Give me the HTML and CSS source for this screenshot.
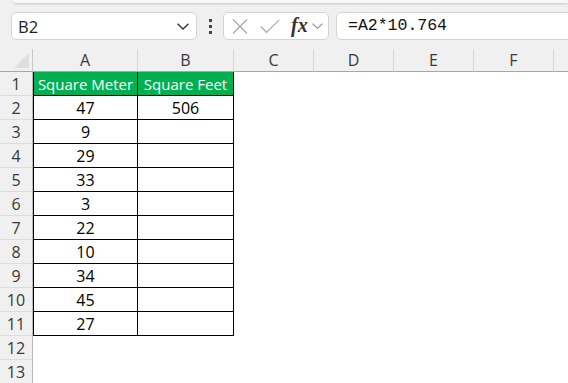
FILE: index.html
```html
<!DOCTYPE html>
<html>
<head>
<meta charset="utf-8">
<link rel="stylesheet" href="styles.css">
</head>
<body>
<div class="app">
  <div class="ribbon-edge"></div>
  <div class="fbar">
    <div class="namebox">
      <span class="nb-text">B2</span>
      <svg class="nb-chev" width="12" height="7" viewBox="0 0 12 7"><path d="M0.5 0.8 L6 6 L11.5 0.8" fill="none" stroke="#333" stroke-width="1.3"/></svg>
    </div>
    <div class="dots"><i></i><i></i><i></i></div>
    <div class="fbtns">
      <svg class="ic-x" width="16" height="15" viewBox="0 0 16 15"><path d="M1 0.5 L15 14.5 M15 0.5 L1 14.5" stroke="#a6a6a6" stroke-width="1.2" fill="none"/></svg>
      <svg class="ic-check" width="20" height="15" viewBox="0 0 20 15"><path d="M0.8 7.5 L6.5 13.5 L19.2 0.8" stroke="#a6a6a6" stroke-width="1.2" fill="none"/></svg>
      <span class="fx">fx</span>
      <svg class="fx-chev" width="11" height="6" viewBox="0 0 11 6"><path d="M0.5 0.6 L5.5 5.3 L10.5 0.6" fill="none" stroke="#8a8a8a" stroke-width="1.1"/></svg>
    </div>
    <div class="formula">=A2*10.764</div>
  </div>
  <div class="sheet">
    <div class="corner"><div class="tri"></div></div>
    <div class="ch">A</div><div class="ch">B</div><div class="ch">C</div><div class="ch">D</div><div class="ch">E</div><div class="ch">F</div><div class="ch last"></div>

    <div class="rh">1</div><div class="c t hd first">Square Meter</div><div class="c t hd">Square Feet</div><div class="e"></div>
    <div class="rh">2</div><div class="c t first">47</div><div class="c t">506</div><div class="e"></div>
    <div class="rh">3</div><div class="c t first">9</div><div class="c t"></div><div class="e"></div>
    <div class="rh">4</div><div class="c t first">29</div><div class="c t"></div><div class="e"></div>
    <div class="rh">5</div><div class="c t first">33</div><div class="c t"></div><div class="e"></div>
    <div class="rh">6</div><div class="c t first">3</div><div class="c t"></div><div class="e"></div>
    <div class="rh">7</div><div class="c t first">22</div><div class="c t"></div><div class="e"></div>
    <div class="rh">8</div><div class="c t first">10</div><div class="c t"></div><div class="e"></div>
    <div class="rh">9</div><div class="c t first">34</div><div class="c t"></div><div class="e"></div>
    <div class="rh">10</div><div class="c t first">45</div><div class="c t"></div><div class="e"></div>
    <div class="rh">11</div><div class="c t first">27</div><div class="c t"></div><div class="e"></div>
    <div class="rh">12</div><div class="c"></div><div class="c"></div><div class="e"></div>
    <div class="rh">13</div><div class="c"></div><div class="c"></div><div class="e"></div>
  </div>
</div>
</body>
</html>
```
FILE: styles.css
```css
html, body {
  margin: 0;
  padding: 0;
  background: #f0f0f0;
  overflow: hidden;
}
.app {
  width: 568px;
  height: 383px;
  overflow: hidden;
  font-family: "Open Sans", "Noto Sans", sans-serif;
}
.ribbon-edge {
  height: 3px;
  margin-left: 13px;
  background: #f8f8f8;
  border-bottom-left-radius: 4px;
  box-shadow: 0 1px 3px rgba(0,0,0,0.18);
}
.fbar {
  display: flex;
  align-items: center;
  height: 28px;
  margin-top: 9px;
  padding-left: 11px;
}
.namebox {
  box-sizing: border-box;
  width: 186px;
  height: 28px;
  background: #fff;
  border: 1px solid #d4d4d4;
  border-radius: 5px;
  display: flex;
  align-items: center;
  justify-content: space-between;
  padding: 0 7px 0 6px;
}
.nb-text {
  font-family: "Open Sans", sans-serif;
  font-size: 16.5px;
  color: #222;
}
.nb-chev { display: block; }
.dots {
  width: 26px;
  display: flex;
  flex-direction: column;
  align-items: center;
  gap: 3px;
}
.dots i {
  display: block;
  width: 3px;
  height: 3px;
  background: #444;
}
.fbtns {
  box-sizing: border-box;
  width: 106px;
  height: 28px;
  background: #fff;
  border: 1px solid #d4d4d4;
  border-radius: 5px;
  display: flex;
  align-items: center;
  padding-left: 8px;
}
.ic-x { display: block; }
.ic-check { display: block; margin-left: 12px; }
.fx {
  font-family: "Liberation Serif", serif;
  font-style: italic;
  font-weight: bold;
  font-size: 20px;
  color: #333;
  margin-left: 11px;
  line-height: 1;
  margin-top: -3px;
}
.fx-chev { display: block; margin-left: 4px; }
.formula {
  box-sizing: border-box;
  flex: 1;
  height: 28px;
  margin-left: 7px;
  margin-right: -10px;
  background: #fff;
  border: 1px solid #d4d4d4;
  border-radius: 5px;
  padding-left: 11px;
  font-family: "Liberation Mono", monospace;
  font-size: 16.5px;
  line-height: 26px;
  color: #111;
}
.sheet {
  margin-top: 9px;
  display: grid;
  grid-template-columns: 33px 105px 96px 80px 80px 80px 80px 14px;
  grid-template-rows: 23px;
  grid-auto-rows: 24px;
  background: #fff;
}
.sheet > div { box-sizing: border-box; }
.corner {
  background: #f0f0f0;
  border-right: 1px solid #c6c6c6;
  border-bottom: 1px solid #a6a6a6;
  position: relative;
}
.tri {
  position: absolute;
  right: 3px;
  bottom: 3px;
  width: 0;
  height: 0;
  border-left: 15px solid transparent;
  border-bottom: 15px solid #dedede;
}
.ch {
  background: #f0f0f0;
  border-right: 1px solid #d6d6d6;
  border-bottom: 1px solid #a6a6a6;
  text-align: center;
  font-size: 16px;
  line-height: 23px;
  color: #383838;
}
.ch.last { grid-column: 8 / -1; border-right: 0; }
.rh {
  background: #f0f0f0;
  border-right: 1px solid #b8b8b8;
  border-bottom: 1px solid #dcdcdc;
  text-align: center;
  font-size: 16px;
  line-height: 25px;
  color: #383838;
}
.c {
  text-align: center;
  font-size: 16px;
  line-height: 25px;
  color: #000;
  background: #fff;
}
.c.t {
  border-right: 1px solid #000;
  border-bottom: 1px solid #000;
}
.c.t.first { border-left: 1px solid #000; }
.c.hd {
  background: #00b050;
  color: #fff;
  font-size: 15px;
}
.e { grid-column: 4 / -1; background: #fff; }
```
